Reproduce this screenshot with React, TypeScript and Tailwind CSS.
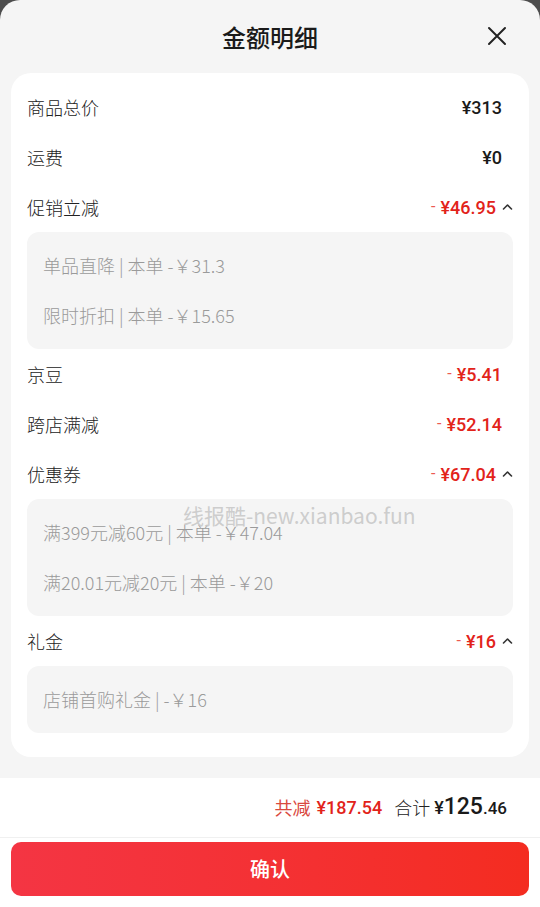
import React from "react";

type Detail = string;

interface Row {
  label: string;
  amount: string;
  minus?: boolean;
  details?: Detail[];
}

const rows: Row[] = [
  { label: "商品总价", amount: "¥313" },
  { label: "运费", amount: "¥0" },
  {
    label: "促销立减",
    amount: "¥46.95",
    minus: true,
    details: ["单品直降 | 本单 -￥31.3", "限时折扣 | 本单 -￥15.65"],
  },
  { label: "京豆", amount: "¥5.41", minus: true },
  { label: "跨店满减", amount: "¥52.14", minus: true },
  {
    label: "优惠券",
    amount: "¥67.04",
    minus: true,
    details: ["满399元减60元 | 本单 -￥47.04", "满20.01元减20元 | 本单 -￥20"],
  },
  { label: "礼金", amount: "¥16", minus: true, details: ["店铺首购礼金 | -￥16"] },
];

const cjk = "font-['Noto_Sans_CJK_SC',sans-serif]";
const num = "font-['Roboto','Noto_Sans_CJK_SC',sans-serif]";

function ChevronUp() {
  return (
    <svg width="11" height="8" viewBox="0 0 11 8" className="ml-[6px]">
      <polyline points="1.5,6 5.5,2 9.5,6" fill="none" stroke="#333" strokeWidth="1.6" strokeLinecap="round" strokeLinejoin="round" />
    </svg>
  );
}

function AmountRow({ row }: { row: Row }) {
  const expandable = !!row.details;
  return (
    <div className="flex h-[50px] items-center justify-between">
      <span className="text-[18px] font-light text-[#222]">{row.label}</span>
      <div className={`flex items-center ${expandable ? "" : "mr-[11px]"}`}>
        {row.minus && <span className={`${num} mr-[5px] text-[16px] text-[#ec5a52]`}>-</span>}
        <span className={`${num} text-[18px] font-medium ${row.minus ? "text-[#e2231a]" : "text-[#1a1a1a]"}`}>
          {row.amount}
        </span>
        {expandable && <ChevronUp />}
      </div>
    </div>
  );
}

export default function App() {
  return (
    <div className={`min-h-[907px] w-[540px] bg-[#4d4d4d] ${cjk}`}>
      <div className="flex min-h-[907px] flex-col overflow-hidden rounded-t-[20px] bg-[#f5f5f5]">
        {/* header */}
        <div className="relative flex h-[73px] items-center justify-center">
          <h1 className="text-[24px] font-medium text-[#1a1a1a]">金额明细</h1>
          <svg width="20" height="20" viewBox="0 0 20 20" className="absolute right-[33px] top-[26px]">
            <path d="M2 2 L18 18 M18 2 L2 18" stroke="#222" strokeWidth="2" strokeLinecap="round" />
          </svg>
        </div>

        {/* card */}
        <div className="relative mx-[11px] rounded-[20px] bg-white px-4 pt-[9px] pb-[24px]">
          {rows.map((row) => (
            <div key={row.label}>
              <AmountRow row={row} />
              {row.details && (
                <div className="rounded-[12px] bg-[#f5f5f5] pt-2 pb-[9px] pl-4">
                  {row.details.map((d) => (
                    <div key={d} className="flex h-[50px] items-center text-[18px] font-light text-[#9a9a9a]">
                      {d}
                    </div>
                  ))}
                </div>
              )}
            </div>
          ))}
          <div className="pointer-events-none absolute left-[172px] top-[427px] text-[21px] text-[#c8c8c8]/90">
            线报酷-new.xianbao.fun
          </div>
        </div>

        <div className="h-[21px]" />

        {/* footer */}
        <div className="flex flex-1 flex-col bg-white">
          <div className="flex h-[60px] items-center justify-end border-b border-[#f0f0f0] pr-[33px]">
            <span className="text-[18px] text-[#d9483e]">共减</span>
            <span className={`${num} ml-[6px] text-[18px] font-medium text-[#e2231a]`}>¥187.54</span>
            <span className="ml-[12px] text-[18px] font-light text-[#222]">合计</span>
            <span className={`${num} ml-[4px] flex items-baseline font-medium text-[#1a1a1a]`}>
              <span className="text-[18px]">¥</span>
              <span className="text-[23px]">125</span>
              <span className="text-[17px]">.46</span>
            </span>
          </div>
          <div className="px-[11px] pt-[4px]">
            <button className="flex h-[54px] w-full items-center justify-center rounded-[10px] bg-gradient-to-r from-[#f43543] to-[#f42c20] text-[20px] font-medium text-white">
              确认
            </button>
          </div>
        </div>
      </div>
    </div>
  );
}
